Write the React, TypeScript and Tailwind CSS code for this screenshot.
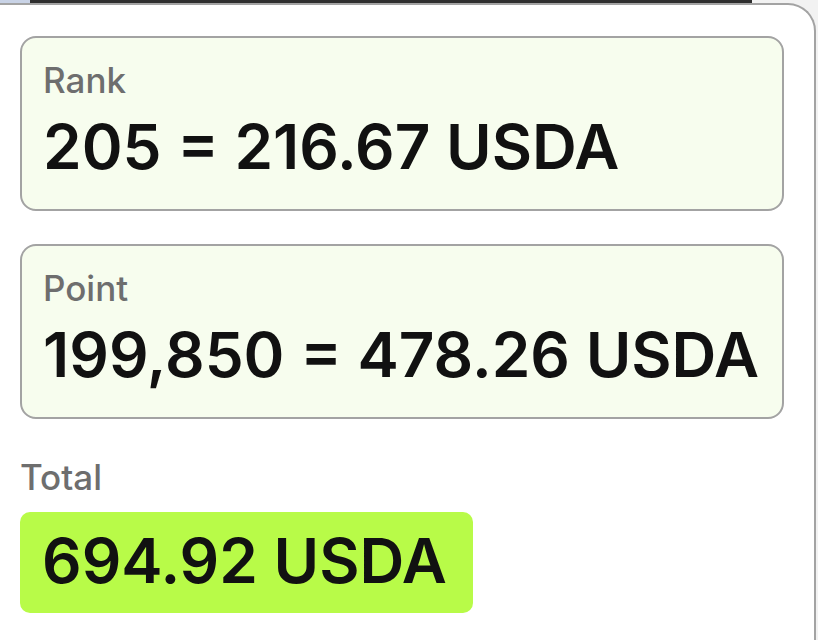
import React from "react";

const font = { fontFamily: "Inter, 'Noto Sans', sans-serif" };

const RewardCard = ({ label, value }: { label: string; value: string }) => (
  <div className="h-[175px] rounded-[16px] border-2 border-[#a3a3a3] bg-[#f7fdee] px-[21px] pt-[22px]">
    <p className="text-[35px] leading-[40px] font-medium text-[#6e6e6e]">{label}</p>
    <p className="mt-[12px] text-[62px] leading-[70px] font-semibold whitespace-nowrap text-[#111111]">
      {value}
    </p>
  </div>
);

export default function App() {
  return (
    <div className="h-[640px] w-[818px] overflow-hidden bg-[#f2f2f2]" style={font}>
      {/* strip of the page behind the popup */}
      <div className="flex h-[3px]">
        <div className="w-[30px] bg-[#c9d3e6]" />
        <div className="w-[722px] bg-[#2e2e2e]" />
      </div>

      <div className="h-[637px] w-[816px] rounded-tr-[28px] border-t-2 border-r-2 border-[#a3a3a3] bg-white pt-[31px] pr-[30px] pl-[20px]">
        {/* rank */}
        <RewardCard label="Rank" value="205 = 216.67 USDA" />

        {/* point */}
        <div className="mt-[33px]">
          <RewardCard label="Point" value="199,850 = 478.26 USDA" />
        </div>

        {/* total */}
        <p className="mt-[38px] text-[35px] leading-[40px] font-medium text-[#6e6e6e]">Total</p>
        <div className="mt-[15px] h-[101px] w-[453px] rounded-[10px] bg-[#b8fb48] px-[22px] pt-[14px]">
          <p className="text-[62px] leading-[70px] font-semibold whitespace-nowrap text-[#111111]">
            694.92 USDA
          </p>
        </div>
      </div>
    </div>
  );
}
